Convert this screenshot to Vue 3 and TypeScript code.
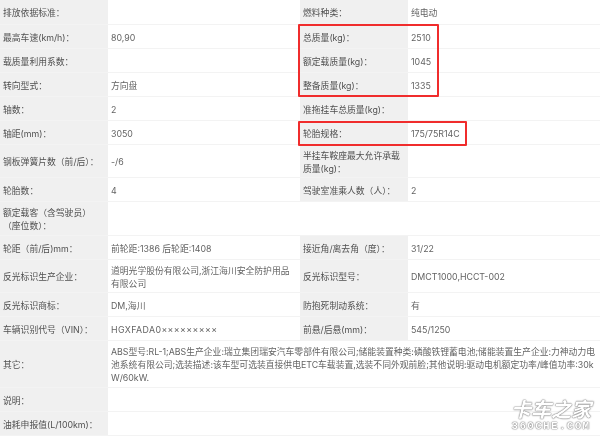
<script setup lang="ts">
interface Row { a: string; b?: string; c?: string; d?: string; h: number; wide?: boolean; vin?: boolean }
const rows: Row[] = [
  { a: '排放依据标准：', c: '燃料种类：', d: '纯电动', h: 25 },
  { a: '最高车速(km/h)：', b: '80,90', c: '总质量(kg)：', d: '2510', h: 24 },
  { a: '载质量利用系数：', c: '额定载质量(kg)：', d: '1045', h: 24 },
  { a: '转向型式：', b: '方向盘', c: '整备质量(kg)：', d: '1335', h: 24 },
  { a: '轴数：', b: '2', c: '准拖挂车总质量(kg)：', h: 24 },
  { a: '轴距(mm)：', b: '3050', c: '轮胎规格：', d: '175/75R14C', h: 24 },
  { a: '钢板弹簧片数（前/后）：', b: '-/6', c: '半挂车鞍座最大允许承载质量(kg)：', h: 33 },
  { a: '轮胎数：', b: '4', c: '驾驶室准乘人数（人）：', d: '2', h: 24 },
  { a: '额定载客（含驾驶员）\n（座位数）：', h: 34 },
  { a: '轮距（前/后)mm：', b: '前轮距:1386 后轮距:1408', c: '接近角/离去角（度）：', d: '31/22', h: 24 },
  { a: '反光标识生产企业：', b: '道明光学股份有限公司,浙江海川安全防护用品有限公司', c: '反光标识型号：', d: 'DMCT1000,HCCT-002', h: 33 },
  { a: '反光标识商标：', b: 'DM,海川', c: '防抱死制动系统：', d: '有', h: 24 },
  { a: '车辆识别代号（VIN）：', b: 'HGXFADA0×××××××××', vin: true, c: '前悬/后悬(mm)：', d: '545/1250', h: 24 },
  { a: '其它：', b: 'ABS型号:RL-1;ABS生产企业:瑞立集团瑞安汽车零部件有限公司;储能装置种类:磷酸铁锂蓄电池;储能装置生产企业:力神动力电池系统有限公司;选装描述:该车型可选装直接供电ETC车载装置,选装不同外观前脸;其他说明:驱动电机额定功率/峰值功率:30kW/60kW.', h: 47, wide: true },
  { a: '说明：', h: 24, wide: true },
  { a: '油耗申报值(L/100km)：', h: 24, wide: true },
]
</script>

<template>
  <div class="page">
    <div class="table">
      <div v-for="(r, i) in rows" :key="i" class="row" :class="{ wide: r.wide }" :style="{ height: r.h + 'px' }">
        <div class="cell label">{{ r.a }}</div>
        <div class="cell value" :class="{ vin: r.vin }">{{ r.b }}</div>
        <template v-if="!r.wide && r.c !== undefined">
          <div class="cell label">{{ r.c }}</div>
          <div class="cell value">{{ r.d }}</div>
        </template>
        <template v-else-if="!r.wide">
          <div class="cell value"></div>
          <div class="cell value"></div>
        </template>
      </div>
    </div>
    <div class="mark mark-a"></div>
    <div class="mark mark-b"></div>
    <div class="logo">
      <div class="logo-cn">卡车之家</div>
      <div class="logo-en">360CHE.COM</div>
    </div>
  </div>
</template>

<style>
html, body { margin: 0; background: #fff; }
</style>

<style scoped>
.page {
  position: relative;
  width: 600px;
  height: 437px;
  overflow: hidden;
  background: #fff;
  font-family: "Inter", "Noto Sans CJK SC", sans-serif;
  font-size: 8.8px;
  line-height: 13px;
  color: #666;
  filter: blur(0.3px);
}
.table {
  display: flex;
  flex-direction: column;
}
.row {
  display: grid;
  grid-template-columns: 108px 192px 108px 192px;
  border-bottom: 1px solid #f3f3f3;
  box-sizing: border-box;
}
.row.wide { grid-template-columns: 108px 492px; }
.cell {
  display: flex;
  align-items: center;
  padding: 1px 3px 0;
  min-width: 0;
  box-sizing: border-box;
  word-break: break-all;
  white-space: pre-line;
}
.label { background: #f0f0f0; color: #505050; }
.value { color: #636363; }
.vin { letter-spacing: 0.4px; }
.mark {
  position: absolute;
  border: 2px solid #f02c2c;
  border-radius: 1px;
  box-sizing: border-box;
}
.mark-a { left: 298px; top: 24px; width: 141px; height: 73px; }
.mark-b { left: 298px; top: 121px; width: 169px; height: 25px; }
.logo {
  position: absolute;
  left: 509px;
  top: 397px;
  width: 84px;
  text-align: center;
  color: #fff;
  text-shadow: 0 0 1px #777, 0 0 1px #777, 0 0 2px #aaa;
}
.logo-cn { font-family: "Noto Sans CJK SC", sans-serif; font-size: 20px; line-height: 24px; font-weight: 700; font-style: italic; }
.logo-en { font-size: 11px; line-height: 10px; font-weight: 700; letter-spacing: 1.3px; font-family: "Liberation Mono", monospace; white-space: nowrap; }
</style>
